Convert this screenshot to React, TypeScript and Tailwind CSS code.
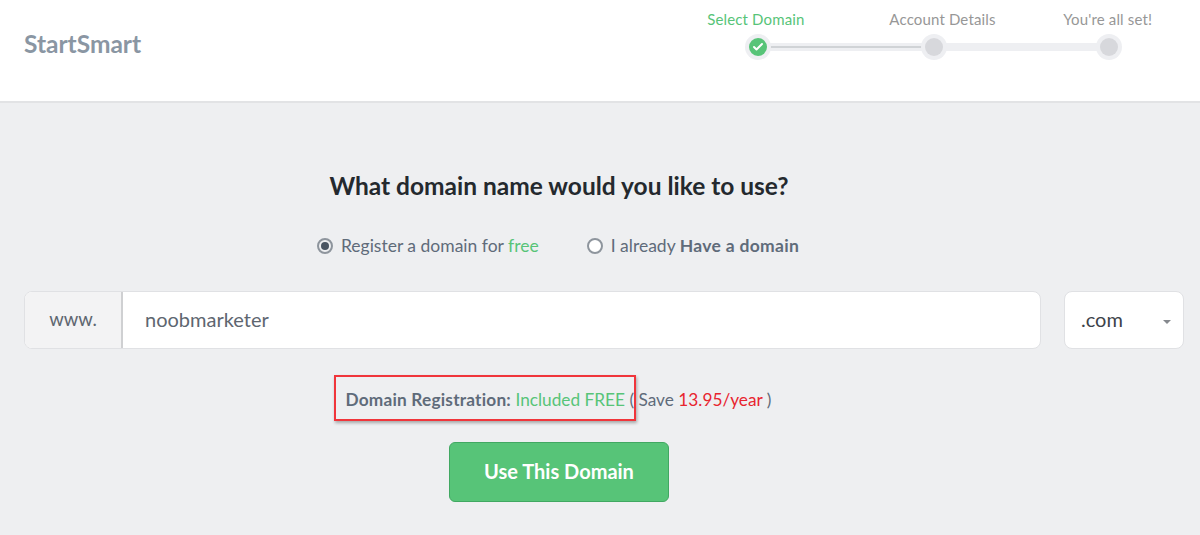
import { Check } from "lucide-react";

function StepDot({ done }: { done?: boolean }) {
  return (
    <div className="z-10 flex h-[26px] w-[26px] shrink-0 items-center justify-center rounded-full bg-[#eeeff2]">
      {done ? (
        <div className="flex h-[18px] w-[18px] items-center justify-center rounded-full bg-[#57c478]">
          <Check className="h-3 w-3 text-white" strokeWidth={4} />
        </div>
      ) : (
        <div className="h-[18px] w-[18px] rounded-full bg-[#d7d8dc]" />
      )}
    </div>
  );
}

function Stepper() {
  return (
    <div className="w-[527px] pt-[10px]">
      <div className="grid grid-cols-3 text-center text-[15px] leading-[18px] tracking-[0.15px] text-[#979797]">
        <span className="pr-1 text-[#57c478]">Select Domain</span>
        <span className="pl-[18px]">Account Details</span>
        <span className="pr-[3px]">You&apos;re all set!</span>
      </div>
      <div className="mt-[6px] flex items-center px-[75px]">
        <StepDot done />
        <div className="-mx-1 flex h-2 flex-1 items-center bg-[#eeeff2]">
          <div className="h-[2px] w-full bg-[#d0d3d6]" />
        </div>
        <StepDot />
        <div className="-mx-1 h-2 flex-1 bg-[#eeeff2]" />
        <StepDot />
      </div>
    </div>
  );
}

export default function App() {
  return (
    <div className="h-[535px] w-[1200px] overflow-hidden bg-[#eeeff1] font-['Lato',sans-serif]">
      <header className="flex h-[103px] justify-between border-b-2 border-[#e2e3e5] bg-white pl-6 pr-[3px]">
        <div className="pt-[30px] text-[24.5px] font-bold leading-[28px] text-[#8a96a3]">StartSmart</div>
        <Stepper />
      </header>

      <main className="pl-6 pr-4 pt-[68px]">
        <h1 className="pr-[90px] text-center text-[24.5px] font-bold leading-[30px] text-[#24292e]">
          What domain name would you like to use?
        </h1>

        <div className="mt-[33px] flex items-center justify-center gap-[48px] pr-[92px] text-[17.5px] leading-[24px] text-[#5f6b7a]">
          <label className="flex items-center gap-2">
            <span className="flex h-4 w-4 items-center justify-center rounded-full border-2 border-[#8e959d]">
              <span className="h-2 w-2 rounded-full bg-[#4a5562]" />
            </span>
            <span>
              Register a domain for <span className="text-[#57c478]">free</span>
            </span>
          </label>
          <label className="flex items-center gap-2">
            <span className="h-4 w-4 rounded-full border-2 border-[#8e959d] bg-white" />
            <span>
              I already <b className="font-bold tracking-[0.3px]">Have a domain</b>
            </span>
          </label>
        </div>

        <div className="mt-[33px] flex gap-[23px]">
          <div className="flex h-[58px] flex-1 overflow-hidden rounded-lg border border-[#e0e1e4] bg-white">
            <div className="flex w-[98px] items-center justify-center border-r-2 border-[#cfd0d2] bg-[#f3f3f4] text-[18.5px] text-[#5e6670]">
              www.
            </div>
            <div className="flex flex-1 items-center pb-[3px] pl-[22px] text-[20px] text-[#5e6670]">noobmarketer</div>
          </div>
          <div className="relative flex h-[58px] w-[120px] items-center rounded-lg border border-[#e0e1e4] bg-white pb-[3px] pl-4 text-[20px] text-[#3d434a]">
            .com
            <span className="absolute right-[12px] top-[28px] h-0 w-0 border-x-[4px] border-t-[4px] border-x-transparent border-t-[#85898e]" />
          </div>
        </div>

        <div className="mt-[39px] flex justify-center pr-[91px] text-[17.25px] leading-[24px] text-[#5f6b7a]">
          <p className="relative">
            <b className="font-bold tracking-[0.2px]">Domain Registration:</b>{" "}
            <span className="text-[#57c478]">Included FREE</span> ( Save{" "}
            <span className="text-[#e8242f]">13.95/year</span> )
            <span className="absolute left-[-12px] top-[-13px] h-[46px] w-[302px] border-2 border-[#f0353b] shadow-[1px_2px_3px_rgba(0,0,0,0.3)]" />
          </p>
        </div>

        <div className="mt-[30px] flex justify-center pr-[90px]">
          <button className="h-[60px] w-[220px] rounded-md border border-[#41a862] bg-[#57c478] pb-[2px] text-[20px] font-bold text-white">
            Use This Domain
          </button>
        </div>
      </main>
    </div>
  );
}
